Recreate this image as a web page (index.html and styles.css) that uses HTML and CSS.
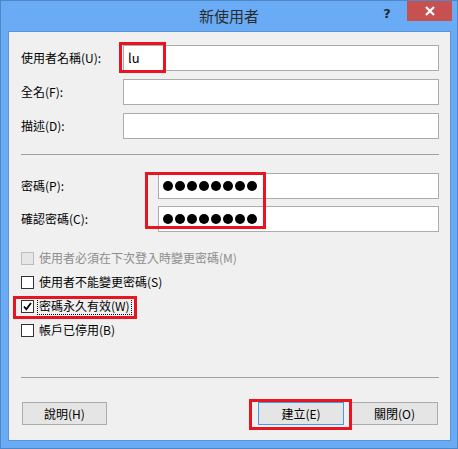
FILE: index.html
```html
<!DOCTYPE html>
<html lang="zh-Hant">
<head>
<meta charset="utf-8">
<title>新使用者</title>
<link rel="stylesheet" href="styles.css">
</head>
<body>
<div class="window">
  <div class="titlebar">
    <div class="tb-left"></div>
    <div class="title">新使用者</div>
    <div class="tb-right">
      <div class="help">?</div>
      <div class="close">
        <svg width="12" height="10" viewBox="0 0 12 10"><path d="M2 1 L10 9 M10 1 L2 9" stroke="#fff" stroke-width="2.2" fill="none"/></svg>
      </div>
    </div>
  </div>
  <div class="client">
    <div class="grid grid-top">
      <label class="lbl">使用者名稱(U):</label>
      <div class="input"><span class="val">lu</span></div>
      <label class="lbl">全名(F):</label>
      <div class="input"></div>
      <label class="lbl">描述(D):</label>
      <div class="input"></div>
    </div>
    <div class="sep sep1"></div>
    <div class="grid grid-pw">
      <label class="lbl">密碼(P):</label>
      <div class="input pw"><span class="dot"></span><span class="dot"></span><span class="dot"></span><span class="dot"></span><span class="dot"></span><span class="dot"></span><span class="dot"></span><span class="dot"></span></div>
      <label class="lbl">確認密碼(C):</label>
      <div class="input pw"><span class="dot"></span><span class="dot"></span><span class="dot"></span><span class="dot"></span><span class="dot"></span><span class="dot"></span><span class="dot"></span><span class="dot"></span></div>
    </div>
    <div class="checks">
      <div class="check disabled"><span class="box"></span><span class="ctext">使用者必須在下次登入時變更密碼(M)</span></div>
      <div class="check"><span class="box"></span><span class="ctext">使用者不能變更密碼(S)</span></div>
      <div class="check"><span class="box"><svg width="11" height="11" viewBox="0 0 11 11"><path d="M2 5.5 L4.3 8.3 L9 2" stroke="#000" stroke-width="1.8" fill="none"/></svg></span><span class="ctext focus">密碼永久有效(W)</span></div>
      <div class="check"><span class="box"></span><span class="ctext">帳戶已停用(B)</span></div>
    </div>
    <div class="sep sep2"></div>
    <div class="buttons">
      <button class="btn btn-help">說明(H)</button>
      <div class="spacer"></div>
      <button class="btn btn-create">建立(E)</button>
      <button class="btn btn-close">關閉(O)</button>
    </div>
  </div>
  <div class="mark mark-user"></div>
  <div class="mark mark-pw"></div>
  <div class="mark mark-never"></div>
  <div class="mark mark-create"></div>
</div>
</body>
</html>
```
FILE: styles.css
```css
* { box-sizing: border-box; }
html, body { margin: 0; padding: 0; background: #fff; }
body { font-family: "Noto Sans CJK TC", "Noto Sans", sans-serif; font-size: 12px; color: #000; }

.window {
  position: relative;
  width: 458px;
  height: 449px;
  background: #6aabf5;
  border: 1px solid #4f86c6;
  display: flex;
  flex-direction: column;
}

.titlebar {
  height: 30px;
  display: grid;
  grid-template-columns: 1fr auto 1fr;
  align-items: start;
}
.title {
  font-size: 15px;
  line-height: 30px;
  color: #2b2b2b;
}
.tb-right {
  display: flex;
  justify-content: flex-end;
  align-items: flex-start;
  padding-right: 5px;
}
.help {
  width: 20px;
  margin-right: 10px;
  margin-top: 4px;
  text-align: center;
  font-family: "DejaVu Sans", sans-serif;
  font-weight: bold;
  font-size: 13px;
  line-height: 18px;
  color: #1f2a38;
}
.close {
  width: 45px;
  height: 20px;
  background: #c75050;
  display: flex;
  align-items: center;
  justify-content: center;
}

.client {
  flex: 1;
  margin: 0 6px 7px 7px;
  background: #f0f0f0;
  border: 1px solid #5a93d6;
  padding: 13px 11px 0 12px;
  display: flex;
  flex-direction: column;
}

.grid { display: grid; align-items: center; }
.grid-top { grid-template-columns: 102px 1fr; grid-auto-rows: 26px; row-gap: 8px; }
.grid-pw { grid-template-columns: 137px 1fr; grid-auto-rows: 26px; row-gap: 7px; margin-top: 18px; }

.lbl { line-height: 16px; white-space: nowrap; }

.input {
  height: 26px;
  background: #fff;
  border: 1px solid #acacac;
  display: flex;
  align-items: center;
  padding-left: 4px;
}
.val { font-size: 13px; line-height: 16px; }
.pw { gap: 2px; padding-left: 4px; }
.dot { width: 10px; height: 10px; border-radius: 50%; background: #000; display: inline-block; }

.sep { height: 1px; background: #a0a0a0; }
.sep1 { margin-top: 15px; }
.sep2 { margin-top: 35px; }

.checks { margin-top: 14px; display: flex; flex-direction: column; }
.check { height: 24px; display: flex; align-items: center; }
.box {
  width: 13px; height: 13px;
  border: 1px solid #333;
  background: #fff;
  display: flex; align-items: center; justify-content: center;
  margin-right: 4px;
}
.ctext { line-height: 16px; padding: 0 1px; white-space: nowrap; }
.focus { outline: 1px dotted #000; outline-offset: 0; }
.disabled .box { border-color: #bcbcbc; background: #e6e6e6; }
.disabled .ctext { color: #8d8d8d; }

.buttons { margin-top: 24px; display: flex; padding: 0 1px; }
.spacer { flex: 1; }
.btn {
  height: 23px;
  font-family: "Noto Sans CJK TC", "Noto Sans", sans-serif;
  font-size: 12px;
  line-height: 16px;
  color: #000;
  background: #e5e5e5;
  border: 1px solid #acacac;
  padding: 0;
}
.btn-help { width: 85px; }
.btn-create { width: 86px; border-color: #3c9cf0; }
.btn-close { width: 87px; margin-left: 7px; }

.mark { position: absolute; border: 3px solid #e8141f; }
.mark-user { left: 118px; top: 41px; width: 47px; height: 31px; }
.mark-pw { left: 144px; top: 171px; width: 121px; height: 57px; }
.mark-never { left: 12px; top: 295px; width: 124px; height: 23px; }
.mark-create { left: 248px; top: 398px; width: 103px; height: 31px; }
```
